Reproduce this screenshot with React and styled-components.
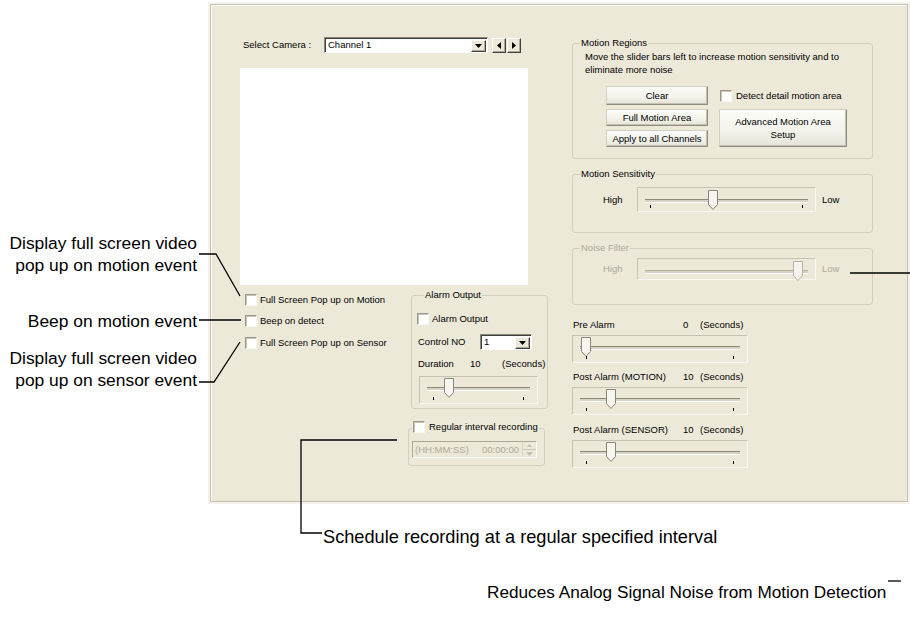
import React from 'react';
import styled, { createGlobalStyle, css } from 'styled-components';

const GlobalStyle = createGlobalStyle`
  html, body { margin: 0; background: #fff; }
  body { font-family: "Liberation Sans", Arial, sans-serif; }
`;

const Page = styled.div`
  position: relative;
  width: 910px;
  height: 624px;
  overflow: hidden;
  background: #fff;
`;

const Overlay = styled.svg`
  position: absolute;
  left: 0;
  top: 0;
  width: 910px;
  height: 624px;
  pointer-events: none;
`;

const TopRow = styled.div`
  display: flex;
`;

const NoteColumn = styled.div`
  width: 210px;
  flex: none;
  box-sizing: border-box;
  padding: 232px 13px 0 0;
  text-align: right;
`;

const Note = styled.div`
  font-size: ${p => p.$size || 17.4}px;
  line-height: 22px;
  color: #000;
  white-space: nowrap;
  margin-top: ${p => p.$gap || 0}px;
  padding-left: ${p => p.$indent || 0}px;
`;

const Panel = styled.div`
  margin-top: 4px;
  width: 698px;
  height: 498px;
  flex: none;
  box-sizing: border-box;
  background: #ece9d8;
  border: 1px solid #c4c1b1;
  box-shadow: 0 0 0 2px #f4f2ea, inset 1px 1px 0 #fbfaf6;
  padding: 32px 0 0 29px;
  display: grid;
  grid-template-columns: 308px 310px;
  column-gap: 24px;
  align-items: start;
  font-size: 9.5px;
  line-height: 12px;
  color: #000;
`;

const Column = styled.div`
  display: flex;
  flex-direction: column;
  align-items: flex-start;
`;

/* ---------- classic controls ---------- */

const raised = css`
  box-sizing: border-box;
  background: #ece9d8;
  border: 1px solid;
  border-color: #fff #404040 #404040 #fff;
  box-shadow: inset -1px -1px 0 #aca899;
  display: flex;
  align-items: center;
  justify-content: center;
  flex: none;
`;

const CameraRow = styled.div`
  display: flex;
  align-items: center;
  height: 16px;
  padding-left: 3px;
`;

const FieldLabel = styled.span`
  width: ${p => p.$w}px;
  flex: none;
  white-space: nowrap;
  color: ${p => (p.$dim ? '#aca899' : '#000')};
`;

const Combo = styled.div`
  width: ${p => p.$w}px;
  height: 16px;
  flex: none;
  box-sizing: border-box;
  background: #fff;
  border: 1px solid;
  border-color: #8a8778 #fff #fff #8a8778;
  box-shadow: inset 1px 1px 0 #404040;
  display: flex;
  align-items: center;
  padding: 0 1px 0 3px;
`;

const ComboText = styled.span`
  flex: 1;
  white-space: nowrap;
`;

const DropButton = styled.span`
  ${raised};
  width: 15px;
  height: 12px;
  margin-top: 1px;
`;

const ArrowButton = styled.span`
  ${raised};
  width: 14px;
  height: 15px;
  margin-left: ${p => p.$gap}px;
`;

const Video = styled.div`
  width: 288px;
  height: 217px;
  margin-top: 15px;
  background: #fff;
`;

const BottomRow = styled.div`
  display: flex;
`;

const OptionList = styled.div`
  width: 171px;
  box-sizing: border-box;
  padding: 8px 0 0 5px;
  display: flex;
  flex-direction: column;
  gap: 8.5px;
`;

const CheckRow = styled.div`
  display: flex;
  align-items: center;
  gap: 3px;
  height: 13px;
  white-space: nowrap;
  margin-top: ${p => p.$mt || 0}px;
  margin-left: ${p => p.$ml || 0}px;
`;

const Box = styled.span`
  width: 12px;
  height: 12px;
  flex: none;
  box-sizing: border-box;
  background: #fff;
  border: 1px solid;
  border-color: #9a988a #f7f6f0 #f7f6f0 #9a988a;
  box-shadow: inset 1px 1px 0 #c9c6b8;
`;

const AlarmColumn = styled.div`
  padding-top: 4px;
  display: flex;
  flex-direction: column;
`;

const Group = styled.fieldset`
  margin: ${p => p.$mt || 0}px 0 0 ${p => p.$ml || 0}px;
  padding: 0 0 ${p => p.$pb || 0}px ${p => p.$pl || 0}px;
  width: ${p => p.$w}px;
  min-width: 0;
  box-sizing: border-box;
  border: 1px solid #d0d0bf;
  border-radius: 3px;
`;

const Legend = styled.legend`
  padding: 0 1px;
  margin-left: ${p => p.$ml ?? 7}px;
  line-height: 12px;
  color: ${p => (p.$dim ? '#aca899' : '#000')};
`;

const LegendInner = styled.span`
  display: inline-flex;
  align-items: center;
  gap: 4px;
`;

const Row = styled.div`
  display: flex;
  align-items: center;
  margin-top: ${p => p.$mt || 0}px;
  padding-left: ${p => p.$pl || 0}px;
  height: ${p => p.$h || 12}px;
`;

const ValueRow = styled.div`
  display: grid;
  grid-template-columns: ${p => p.$cols};
  height: 12px;
  white-space: nowrap;
  margin-top: ${p => p.$mt || 0}px;
  padding-left: 1px;
`;

const Desc = styled.div`
  padding-left: 12px;
  margin-top: 1px;
  line-height: 13px;
`;

const ButtonGrid = styled.div`
  display: grid;
  grid-template-columns: 102px 128px;
  grid-template-rows: 19px 17px 17px;
  column-gap: 11px;
  row-gap: 4px;
  margin: 10px 0 0 33px;
`;

const PushButton = styled.div`
  grid-column: ${p => p.$col || 1};
  grid-row: ${p => p.$row};
  box-sizing: border-box;
  display: flex;
  align-items: center;
  justify-content: center;
  text-align: center;
  line-height: 13px;
  background: linear-gradient(#fdfdfa, #f0efe7 70%, #e6e4d8);
  border: 1px solid;
  border-color: #d2d0c3 #8f8c7e #8f8c7e #d2d0c3;
  box-shadow: inset -1px -1px 0 #c5c2b4;
  border-radius: 1px;
`;

const DetectCell = styled.div`
  grid-column: 2;
  grid-row: 1;
  display: flex;
  align-items: center;
  gap: 4px;
  padding-left: 1px;
  white-space: nowrap;
`;

/* ---------- trackbar ---------- */

const SliderBox = styled.div`
  position: relative;
  flex: none;
  width: ${p => p.$w}px;
  height: ${p => p.$h}px;
  margin-top: ${p => p.$mt || 0}px;
  margin-left: ${p => p.$ml || 0}px;
  box-sizing: border-box;
  border: 1px solid;
  border-color: #c6c3b3 #f9f8f3 #f9f8f3 #c6c3b3;
`;

const Groove = styled.div`
  position: absolute;
  left: 7px;
  right: 7px;
  top: ${p => p.$top}px;
  height: 2px;
  border-top: 1px solid ${p => (p.$dim ? '#b3b0a1' : '#8d8a7a')};
  border-bottom: 1px solid #fff;
  background: #d6d3c4;
`;

const ThumbShape = styled.svg`
  position: absolute;
  top: ${p => p.$top}px;
  left: ${p => p.$x}px;
`;

const Tick = styled.span`
  position: absolute;
  bottom: 3px;
  width: 1px;
  height: 3px;
  background: #000;
  ${p => (p.$right ? `right: ${p.$inset}px;` : `left: ${p.$inset}px;`)}
`;

const SideLabel = styled.span`
  width: ${p => p.$w}px;
  flex: none;
  box-sizing: border-box;
  padding-left: ${p => p.$pl || 0}px;
  color: ${p => (p.$dim ? '#aca899' : '#000')};
`;

/* ---------- time field ---------- */

const TimeField = styled.div`
  width: 125px;
  height: 17px;
  margin: 5px 0 0 3px;
  box-sizing: border-box;
  border: 1px solid;
  border-color: #aca899 #fff #fff #aca899;
  display: flex;
  align-items: center;
  padding-left: 2px;
  color: #aca899;
  white-space: nowrap;
`;

const Spin = styled.div`
  margin-left: auto;
  width: 13px;
  height: 15px;
  display: flex;
  flex-direction: column;
  border-left: 1px solid #d8d5c7;
`;

const SpinHalf = styled.span`
  flex: 1;
  display: flex;
  align-items: center;
  justify-content: center;
  border-bottom: ${p => (p.$top ? '1px solid #c9c6b7' : 'none')};
`;

const Tri = ({ dir, color = '#000' }) => {
  const paths = {
    down: ['7', '4', 'M0 0h7L3.5 4z'],
    up: ['5', '3', 'M0 3h5L2.5 0z'],
    left: ['4', '7', 'M4 0v7L0 3.5z'],
    right: ['4', '7', 'M0 0v7l4-3.5z'],
  };
  const [w, h, d] = paths[dir];
  return (
    <svg width={w} height={h} viewBox={`0 0 ${w} ${h}`}>
      <path d={d} fill={color} />
    </svg>
  );
};

const Slider = ({ w, h = 28, x, grooveTop = 10, ticks = true, dim, mt, ml, tickInset = 12 }) => (
  <SliderBox $w={w} $h={h} $mt={mt} $ml={ml}>
    <Groove $top={grooveTop} $dim={dim} />
    <ThumbShape $x={x} $top={grooveTop - 9} width="11" height="20" viewBox="0 0 11 20">
      <path
        d="M0.5 0.5H9.5V14.5L5 19.5L0.5 14.5Z"
        fill={dim ? '#f4f3ee' : '#f6f5f0'}
        stroke={dim ? '#b6b3a4' : '#8a8778'}
      />
      <path d="M1.5 1.5H8.5" stroke="#fff" />
    </ThumbShape>
    {ticks && (
      <>
        <Tick $inset={tickInset} />
        <Tick $right $inset={tickInset} />
      </>
    )}
  </SliderBox>
);

const Check = ({ children, mt, ml }) => (
  <CheckRow $mt={mt} $ml={ml}>
    <Box />
    <span>{children}</span>
  </CheckRow>
);

const App = () => (
  <Page>
    <GlobalStyle />
    <TopRow>
      <NoteColumn>
        <Note>Display full screen video</Note>
        <Note>pop up on motion event</Note>
        <Note $gap={34}>Beep on motion event</Note>
        <Note $gap={15}>Display full screen video</Note>
        <Note>pop up on sensor event</Note>
      </NoteColumn>

      <Panel>
        <Column>
          <CameraRow>
            <FieldLabel $w={81}>Select Camera :</FieldLabel>
            <Combo $w={164}>
              <ComboText>Channel 1</ComboText>
              <DropButton><Tri dir="down" /></DropButton>
            </Combo>
            <ArrowButton $gap={4}><Tri dir="left" /></ArrowButton>
            <ArrowButton $gap={1}><Tri dir="right" /></ArrowButton>
          </CameraRow>

          <Video />

          <BottomRow>
            <OptionList>
              <Check>Full Screen Pop up on Motion</Check>
              <Check>Beep on detect</Check>
              <Check>Full Screen Pop up on Sensor</Check>
            </OptionList>

            <AlarmColumn>
              <Group $w={137} $pl={5} $pb={4}>
                <Legend>Alarm Output</Legend>
                <Check mt={11}>Alarm Output</Check>
                <Row $mt={9} $h={16} $pl={1}>
                  <FieldLabel $w={62}>Control NO</FieldLabel>
                  <Combo $w={52}>
                    <ComboText>1</ComboText>
                    <DropButton><Tri dir="down" /></DropButton>
                  </Combo>
                </Row>
                <ValueRow $mt={8} $cols="52px 32px auto">
                  <span>Duration</span>
                  <span>10</span>
                  <span>(Seconds)</span>
                </ValueRow>
                <Slider w={119} x={24} mt={6} ml={2} tickInset={13} />
              </Group>

              <Group $w={137} $ml={-3} $mt={12} $pb={7}>
                <Legend $ml={3}>
                  <LegendInner>
                    <Box />
                    <span>Regular interval recording</span>
                  </LegendInner>
                </Legend>
                <TimeField>
                  <FieldLabel $w={67} $dim>(HH:MM:SS)</FieldLabel>
                  <span>00:00:00</span>
                  <Spin>
                    <SpinHalf $top><Tri dir="up" color="#c3c0b1" /></SpinHalf>
                    <SpinHalf><Tri dir="down" color="#c3c0b1" /></SpinHalf>
                  </Spin>
                </TimeField>
              </Group>
            </AlarmColumn>
          </BottomRow>
        </Column>

        <Column>
          <Group $w={301} $pb={11}>
            <Legend>Motion Regions</Legend>
            <Desc>
              Move the slider bars left to increase motion sensitivity and to
              <br />
              eliminate more noise
            </Desc>
            <ButtonGrid>
              <PushButton $row={1}>Clear</PushButton>
              <DetectCell>
                <Box />
                <span>Detect detail motion area</span>
              </DetectCell>
              <PushButton $row={2}>Full Motion Area</PushButton>
              <PushButton $row={3}>Apply to all Channels</PushButton>
              <PushButton $col={2} $row="2 / span 2">
                Advanced Motion Area
                <br />
                Setup
              </PushButton>
            </ButtonGrid>
          </Group>

          <Group $w={301} $mt={9} $pb={20}>
            <Legend>Motion Sensitivity</Legend>
            <Row $mt={7} $h={25}>
              <SideLabel $w={64} $pl={30}>High</SideLabel>
              <Slider w={179} h={25} x={70} grooveTop={11} />
              <SideLabel $w={40} $pl={6}>Low</SideLabel>
            </Row>
          </Group>

          <Group $w={301} $mt={9} $pb={24}>
            <Legend $dim>Noise Filter</Legend>
            <Row $mt={4} $h={22}>
              <SideLabel $w={64} $pl={30} $dim>High</SideLabel>
              <Slider w={179} h={22} x={155} grooveTop={11} ticks={false} dim />
              <SideLabel $w={40} $pl={6} $dim>Low</SideLabel>
            </Row>
          </Group>

          <ValueRow $mt={14} $cols="110px 17px auto">
            <span>Pre Alarm</span>
            <span>0</span>
            <span>(Seconds)</span>
          </ValueRow>
          <Slider w={176} x={8} mt={4} tickInset={13} />

          <ValueRow $mt={8} $cols="110px 17px auto">
            <span>Post Alarm (MOTION)</span>
            <span>10</span>
            <span>(Seconds)</span>
          </ValueRow>
          <Slider w={176} x={33} mt={4} tickInset={13} />

          <ValueRow $mt={9} $cols="110px 17px auto">
            <span>Post Alarm (SENSOR)</span>
            <span>10</span>
            <span>(Seconds)</span>
          </ValueRow>
          <Slider w={176} x={33} mt={4} tickInset={13} />
        </Column>
      </Panel>
    </TopRow>

    <Note $gap={24} $indent={323} $size={18.2}>
      Schedule recording at a regular specified interval
    </Note>
    <Note $gap={33} $indent={487} $size={17.2}>
      Reduces Analog Signal Noise from Motion Detection
    </Note>

    <Overlay viewBox="0 0 910 624">
      <g fill="none" stroke="#000" strokeWidth="1.3">
        <polyline points="199,254 216,254 240,296" />
        <line x1="199" y1="320" x2="241" y2="320" />
        <polyline points="199,382 214,382 240,342" />
        <polyline points="397,440 301,440 301,533 322,533" />
        <line x1="850" y1="273" x2="910" y2="273" />
        <line x1="888" y1="581" x2="901" y2="581" />
      </g>
    </Overlay>
  </Page>
);

export default App;
